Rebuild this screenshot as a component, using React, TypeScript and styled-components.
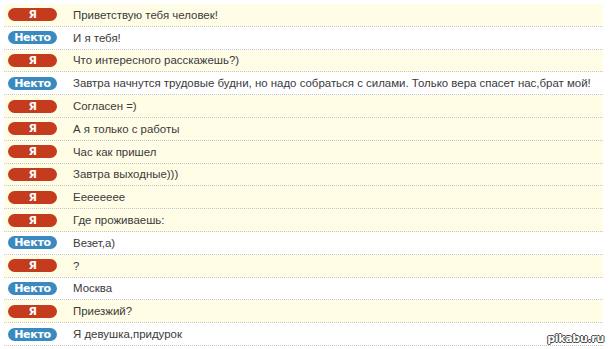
import React from 'react';
import styled, { createGlobalStyle } from 'styled-components';

const GlobalStyle = createGlobalStyle`
  html, body {
    margin: 0;
    padding: 0;
    background: #fff;
  }
  body {
    font-family: 'Liberation Sans', Arial, sans-serif;
  }
`;

type Who = 'me' | 'stranger';

const messages: { who: Who; text: string }[] = [
  { who: 'me', text: 'Приветствую тебя человек!' },
  { who: 'stranger', text: 'И я тебя!' },
  { who: 'me', text: 'Что интересного расскажешь?)' },
  {
    who: 'stranger',
    text: 'Завтра начнутся трудовые будни, но надо собраться с силами. Только вера спасет нас,брат мой!',
  },
  { who: 'me', text: 'Согласен =)' },
  { who: 'me', text: 'А я только с работы' },
  { who: 'me', text: 'Час как пришел' },
  { who: 'me', text: 'Завтра выходные)))' },
  { who: 'me', text: 'Ееееееее' },
  { who: 'me', text: 'Где проживаешь:' },
  { who: 'stranger', text: 'Везет,а)' },
  { who: 'me', text: '?' },
  { who: 'stranger', text: 'Москва' },
  { who: 'me', text: 'Приезжий?' },
  { who: 'stranger', text: 'Я девушка,придурок' },
];

const Page = styled.div`
  position: relative;
  width: 609px;
  height: 349px;
  padding: 4px 6px 0 4px;
  box-sizing: border-box;
  overflow: hidden;
`;

const Log = styled.div`
  display: flex;
  flex-direction: column;
`;

const Row = styled.div<{ $who: Who }>`
  display: flex;
  align-items: center;
  gap: 16px;
  height: 22.8px;
  box-sizing: border-box;
  padding: 0 0 0 4px;
  border-bottom: 1px dotted #c8c8c8;
  background: ${({ $who }) => ($who === 'me' ? '#fffde6' : '#ffffff')};
`;

const Badge = styled.span<{ $who: Who }>`
  flex: 0 0 49px;
  height: 13px;
  border-radius: 7px;
  background: ${({ $who }) => ($who === 'me' ? '#c43b1d' : '#3a8ac0')};
  color: #fff;
  font-family: 'DejaVu Sans', Tahoma, sans-serif;
  font-size: 11px;
  font-weight: bold;
  line-height: 13px;
  text-align: center;
  letter-spacing: -0.3px;
`;

const Text = styled.span`
  font-size: 11.45px;
  color: #3a3a3a;
  white-space: nowrap;
`;

const Watermark = styled.span`
  position: absolute;
  right: 5px;
  bottom: 4px;
  font-family: 'DejaVu Sans', Verdana, sans-serif;
  font-size: 11px;
  font-weight: bold;
  color: #fff;
  letter-spacing: -0.3px;
  text-shadow: -1px 0 #444, 1px 0 #444, 0 -1px #444, 0 1px #444;
`;

export default function App() {
  return (
    <Page>
      <GlobalStyle />
      <Log>
        {messages.map((m, i) => (
          <Row key={i} $who={m.who}>
            <Badge $who={m.who}>{m.who === 'me' ? 'Я' : 'Некто'}</Badge>
            <Text>{m.text}</Text>
          </Row>
        ))}
      </Log>
      <Watermark>pikabu.ru</Watermark>
    </Page>
  );
}
